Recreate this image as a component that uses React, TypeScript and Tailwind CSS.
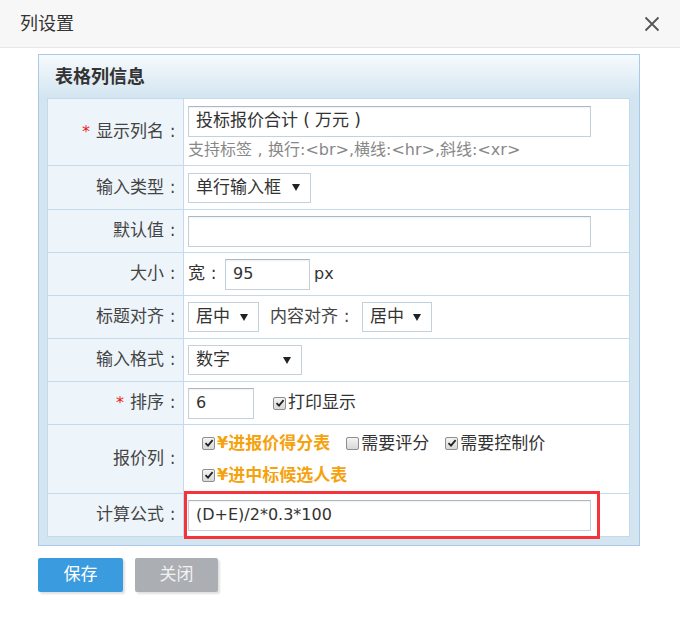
import React from "react";

const font = { fontFamily: '"DejaVu Sans", "Noto Sans CJK SC", sans-serif' };

function Colon() {
  return <span className="inline-block w-[17px] text-center">:</span>;
}

function Check({ checked }: { checked: boolean }) {
  return (
    <span className="inline-flex w-[13px] h-[13px] rounded-[2px] border border-[#8f8f8f] bg-gradient-to-b from-[#f4f4f4] to-[#d8d8d8] items-center justify-center mr-[2px] shrink-0">
      {checked && (
        <svg width="10" height="10" viewBox="0 0 10 10">
          <path d="M1.5 5.2 L4 7.6 L8.6 2.2" stroke="#222" strokeWidth="1.8" fill="none" />
        </svg>
      )}
    </span>
  );
}

function Arrow() {
  return (
    <svg width="8" height="7" viewBox="0 0 8 7">
      <path d="M0 0 H8 L4 7 Z" fill="#222" />
    </svg>
  );
}

function Select({ value, w }: { value: string; w: string }) {
  return (
    <div className={`${w} h-[30px] border border-[#c2d1dc] bg-white flex items-center justify-between pl-[7px] pr-[10px] text-[17px] text-[#333]`}>
      <span>{value}</span>
      <Arrow />
    </div>
  );
}

function Input({ children, w }: { children?: React.ReactNode; w: string }) {
  return (
    <div className={`${w} h-[31px] border border-[#c2d1dc] border-t-[#a9b8c2] bg-white flex items-center px-[7px] text-[17px] text-[#333] shadow-[inset_0_1px_2px_rgba(0,0,0,0.06)] whitespace-nowrap`}>
      {children}
    </div>
  );
}

function Label({ label, star }: { label: string; star?: boolean }) {
  return (
    <td className="w-[136px] bg-[#eef5fa] border border-[#c3d9ec] text-right pr-[2px] text-[17px] text-[#444] align-middle whitespace-nowrap">
      {star && <span className="text-[#e8211b] mr-[6px] text-[16px]">*</span>}
      {label}
      <Colon />
    </td>
  );
}

function Row({ label, star, h, children }: { label: string; star?: boolean; h: string; children: React.ReactNode }) {
  return (
    <tr className={h}>
      <Label label={label} star={star} />
      <td className="bg-white border border-[#c3d9ec] pl-[4px] align-middle">{children}</td>
    </tr>
  );
}

export default function App() {
  return (
    <div className="w-[680px] h-[617px] bg-white relative" style={font}>
      <div className="h-[48px] bg-[#f7f7f7] border-b border-[#e8e8e8] flex items-center justify-between pl-[20px] pr-[20px]">
        <span className="text-[18px] text-[#333]">列设置</span>
        <svg width="16" height="16" viewBox="0 0 16 16">
          <path d="M1.5 1.5 L14.5 14.5 M14.5 1.5 L1.5 14.5" stroke="#555" strokeWidth="1.8" />
        </svg>
      </div>
      <div className="ml-[38px] mt-[6px] w-[602px] border border-[#a8c9e7] bg-[#d3e5f0]">
        <div className="h-[43px] flex items-center pl-[16px] text-[18px] font-bold text-[#333] bg-gradient-to-b from-[#f6fafd] to-[#d3e5f0]">表格列信息</div>
        <div className="px-[8px] pb-[8px] bg-[#d3e5f0]">
          <table className="w-[583px] border-collapse">
            <tbody>
              <Row label="显示列名" star h="h-[67px]">
                <div className="pt-[2px]">
                  <Input w="w-[403px]">
                    投标报价合计<span className="inline-block w-[17px] text-center">(</span>万元<span className="inline-block w-[17px] text-center">)</span>
                  </Input>
                  <div className="text-[16px] text-[#888] mt-[2px] leading-[22px] whitespace-nowrap">
                    支持标签<span className="inline-block w-[16px] text-center">,</span>换行:&lt;br&gt;,横线:&lt;hr&gt;,斜线:&lt;xr&gt;
                  </div>
                </div>
              </Row>
              <Row label="输入类型" h="h-[44px]">
                <Select value="单行输入框" w="w-[123px]" />
              </Row>
              <Row label="默认值" h="h-[43px]">
                <Input w="w-[403px]" />
              </Row>
              <Row label="大小" h="h-[43px]">
                <div className="flex items-center text-[17px] text-[#333]">
                  <span>宽</span>
                  <Colon />
                  <span className="w-[3px]" />
                  <Input w="w-[85px]"><span className="text-[16px]">95</span></Input>
                  <span className="ml-[4px] text-[16px]">px</span>
                </div>
              </Row>
              <Row label="标题对齐" h="h-[43px]">
                <div className="flex items-center text-[17px] text-[#444]">
                  <Select value="居中" w="w-[71px]" />
                  <span className="ml-[11px] mr-[7px]">内容对齐<Colon /></span>
                  <Select value="居中" w="w-[70px]" />
                </div>
              </Row>
              <Row label="输入格式" h="h-[43px]">
                <Select value="数字" w="w-[114px]" />
              </Row>
              <Row label="排序" star h="h-[43px]">
                <div className="flex items-center text-[17px] text-[#333]">
                  <Input w="w-[66px]"><span className="text-[16px]">6</span></Input>
                  <span className="ml-[19px] flex items-center"><Check checked />打印显示</span>
                </div>
              </Row>
              <Row label="报价列" h="h-[69px]">
                <div className="pl-[14px] text-[17px] leading-[32px]">
                  <div className="flex items-center">
                    <span className="flex items-center font-bold text-[#f5a20f]"><Check checked /><span className="text-[16px]">¥</span>进报价得分表</span>
                    <span className="flex items-center ml-[16px] text-[#333]"><Check checked={false} />需要评分</span>
                    <span className="flex items-center ml-[16px] text-[#333]"><Check checked />需要控制价</span>
                  </div>
                  <div className="flex items-center">
                    <span className="flex items-center font-bold text-[#f5a20f]"><Check checked /><span className="text-[16px]">¥</span>进中标候选人表</span>
                  </div>
                </div>
              </Row>
              <tr className="h-[43px]">
                <Label label="计算公式" />
                <td className="bg-white border border-[#c3d9ec] p-0 align-middle relative">
                  <div className="absolute left-0 top-[-3px] w-[416px] h-[48px] border-[3px] border-[#f3343a]" />
                  <div className="pl-[4px]">
                    <Input w="w-[403px]"><span className="text-[16px]">(D+E)/2*0.3*100</span></Input>
                  </div>
                </td>
              </tr>
            </tbody>
          </table>
        </div>
      </div>
      <div className="flex ml-[38px] mt-[12px] gap-[12px]">
        <div className="w-[85px] h-[34px] bg-[#3a9bdf] rounded-[2px] text-white text-[17px] flex items-center justify-center shadow-[2px_2px_2px_rgba(0,0,0,0.12)]">保存</div>
        <div className="w-[83px] h-[34px] bg-[#abaeb3] rounded-[2px] text-[#f2f2f2] text-[17px] flex items-center justify-center shadow-[2px_2px_2px_rgba(0,0,0,0.12)]">关闭</div>
      </div>
    </div>
  );
}
